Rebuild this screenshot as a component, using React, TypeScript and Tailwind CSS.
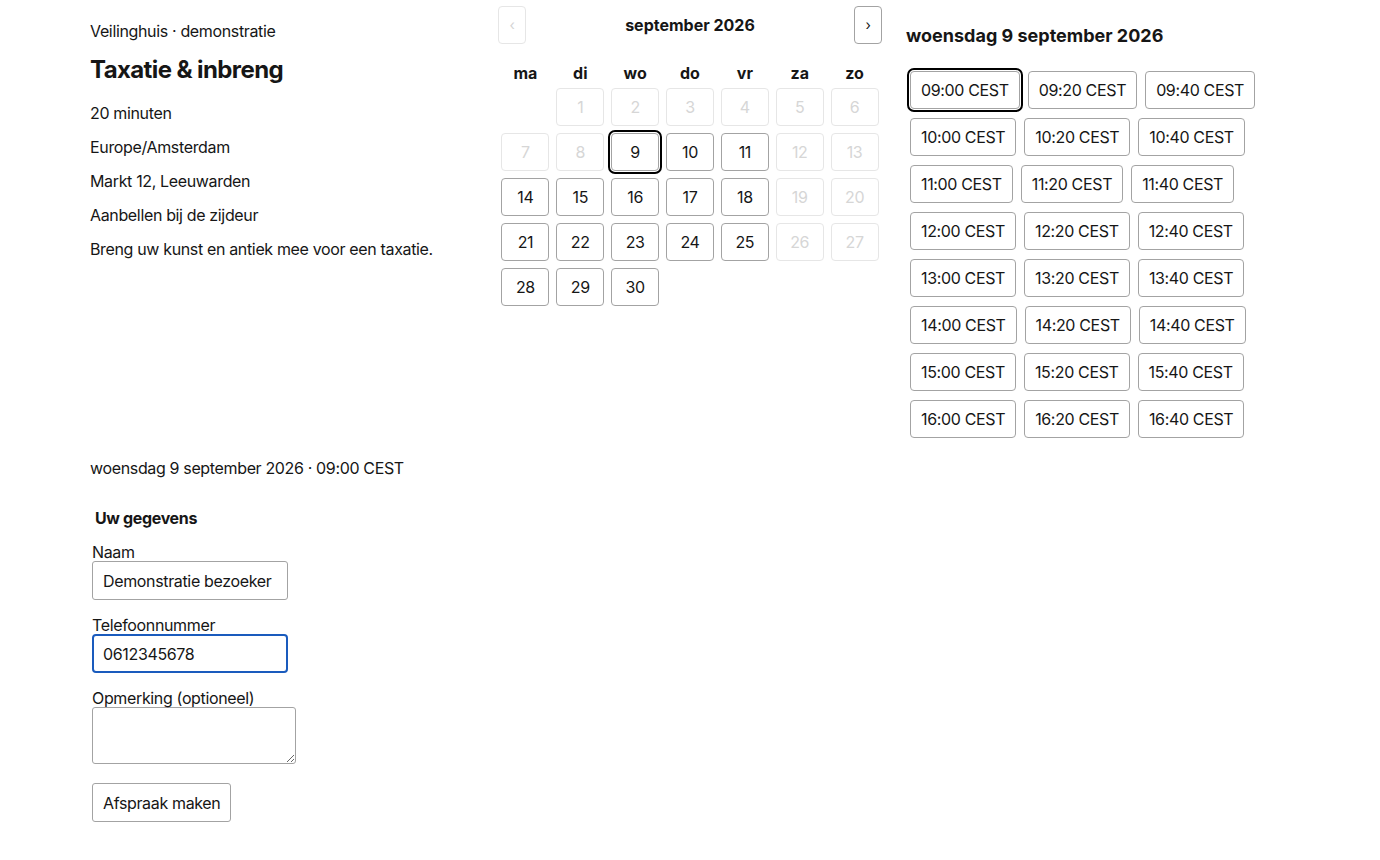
import React from "react";

function isAvailable(d: number) {
  // Sept 1 2026 is Tuesday (col 1)
  const col = d % 7; // ma=0 ... zo=6
  if (d < 9) return false;
  return col !== 5 && col !== 6 && d !== 26;
}

const slots = [
  "09:00", "09:20", "09:40",
  "10:00", "10:20", "10:40",
  "11:00", "11:20", "11:40",
  "12:00", "12:20", "12:40",
  "13:00", "13:20", "13:40",
  "14:00", "14:20", "14:40",
  "15:00", "15:20", "15:40",
  "16:00", "16:20", "16:40",
];

const rows: string[][] = [];
for (let i = 0; i < slots.length; i += 3) rows.push(slots.slice(i, i + 3));

export default function App() {
  return (
    <div
      className="min-h-[860px] bg-white text-[#161616] tracking-[-0.35px]"
      style={{ fontFamily: "Inter, 'Noto Sans', sans-serif" }}
    >
      <div className="mx-auto w-[1200px] pt-[6px]">
        <div className="grid grid-cols-3 gap-6 items-start">
          {/* Left */}
          <div className="pt-[13px] flex flex-col text-base leading-6">
            <div>Veilinghuis · demonstratie</div>
            <h1 className="mt-[11px] text-2xl leading-8 font-bold tracking-[-0.6px]">Taxatie &amp; inbreng</h1>
            <div className="mt-[15px] flex flex-col gap-[10px]">
              <div>20 minuten</div>
              <div>Europe/Amsterdam</div>
              <div>Markt 12, Leeuwarden</div>
              <div>Aanbellen bij de zijdeur</div>
              <div>Breng uw kunst en antiek mee voor een taxatie.</div>
            </div>
          </div>

          {/* Calendar */}
          <div>
            <div className="flex items-center justify-between h-[38px]">
              <button className="w-[28px] h-[38px] rounded-[4px] border border-[#e6e6e6] text-[#d4d4d4] text-sm leading-none">
                ‹
              </button>
              <div className="font-bold text-base tracking-normal">september 2026</div>
              <button className="w-[28px] h-[38px] rounded-[4px] border border-[#a3a3a3] text-[#161616] text-sm leading-none">
                ›
              </button>
            </div>
            <div className="mt-[17px] grid grid-cols-7 leading-6 font-bold text-base text-center tracking-normal">
              {["ma", "di", "wo", "do", "vr", "za", "zo"].map((w) => (
                <div key={w}>{w}</div>
              ))}
            </div>
            <div className="mt-[3px] grid grid-cols-7 gap-y-[7px]">
              <div />
              {Array.from({ length: 30 }, (_, i) => i + 1).map((d) => {
                const on = isAvailable(d);
                const sel = d === 9;
                return (
                  <div key={d} className="flex justify-center">
                    <button
                      className={
                        "w-[48px] h-[38px] rounded-[4px] border text-base " +
                        (sel
                          ? "border-[#a3a3a3] outline-2 outline-black outline-offset-1 text-[#161616]"
                          : on
                          ? "border-[#a3a3a3] text-[#161616]"
                          : "border-[#e6e6e6] text-[#d6d6d6]")
                      }
                    >
                      {d}
                    </button>
                  </div>
                );
              })}
            </div>
          </div>

          {/* Slots */}
          <div className="pt-[16px]">
            <h2 className="text-lg leading-7 font-bold tracking-normal">woensdag 9 september 2026</h2>
            <div className="mt-[21px] pl-[4px] flex flex-col gap-y-[9px]">
              {rows.map((r) => (
                <div key={r[0]} className="flex gap-2">
                  {r.map((t) => (
                    <button
                      key={t}
                      className={
                        "h-[38px] px-[10px] rounded-[4px] border border-[#a3a3a3] text-base whitespace-nowrap " +
                        (t === "09:00" ? "outline-2 outline-black outline-offset-1" : "")
                      }
                    >
                      {t} CEST
                    </button>
                  ))}
                </div>
              ))}
            </div>
          </div>
        </div>

        {/* Bottom */}
        <div className="mt-[18px] leading-6">woensdag 9 september 2026 · 09:00 CEST</div>
        <div className="mt-[26px] pl-[2px]">
          <div className="pl-[3px] font-bold leading-6">Uw gegevens</div>
          <label className="mt-[13px] block leading-[18px]">Naam</label>
          <input
            className="block w-[196px] h-[39px] rounded-[3px] border border-[#a3a3a3] px-[10px] text-base outline-none"
            defaultValue="Demonstratie bezoeker"
          />
          <label className="mt-[16px] block leading-[18px]">Telefoonnummer</label>
          <input
            className="block w-[196px] h-[39px] rounded-[4px] border-2 border-[#1a5bbd] px-[9px] text-base outline-none"
            defaultValue="0612345678"
          />
          <label className="mt-[16px] block leading-[18px]">Opmerking (optioneel)</label>
          <textarea className="block w-[204px] h-[57px] rounded-[3px] border border-[#a3a3a3] outline-none" />
          <button className="mt-[19px] block h-[39px] px-[10px] rounded-[3px] border border-[#a3a3a3] text-base">
            Afspraak maken
          </button>
        </div>
      </div>
    </div>
  );
}
